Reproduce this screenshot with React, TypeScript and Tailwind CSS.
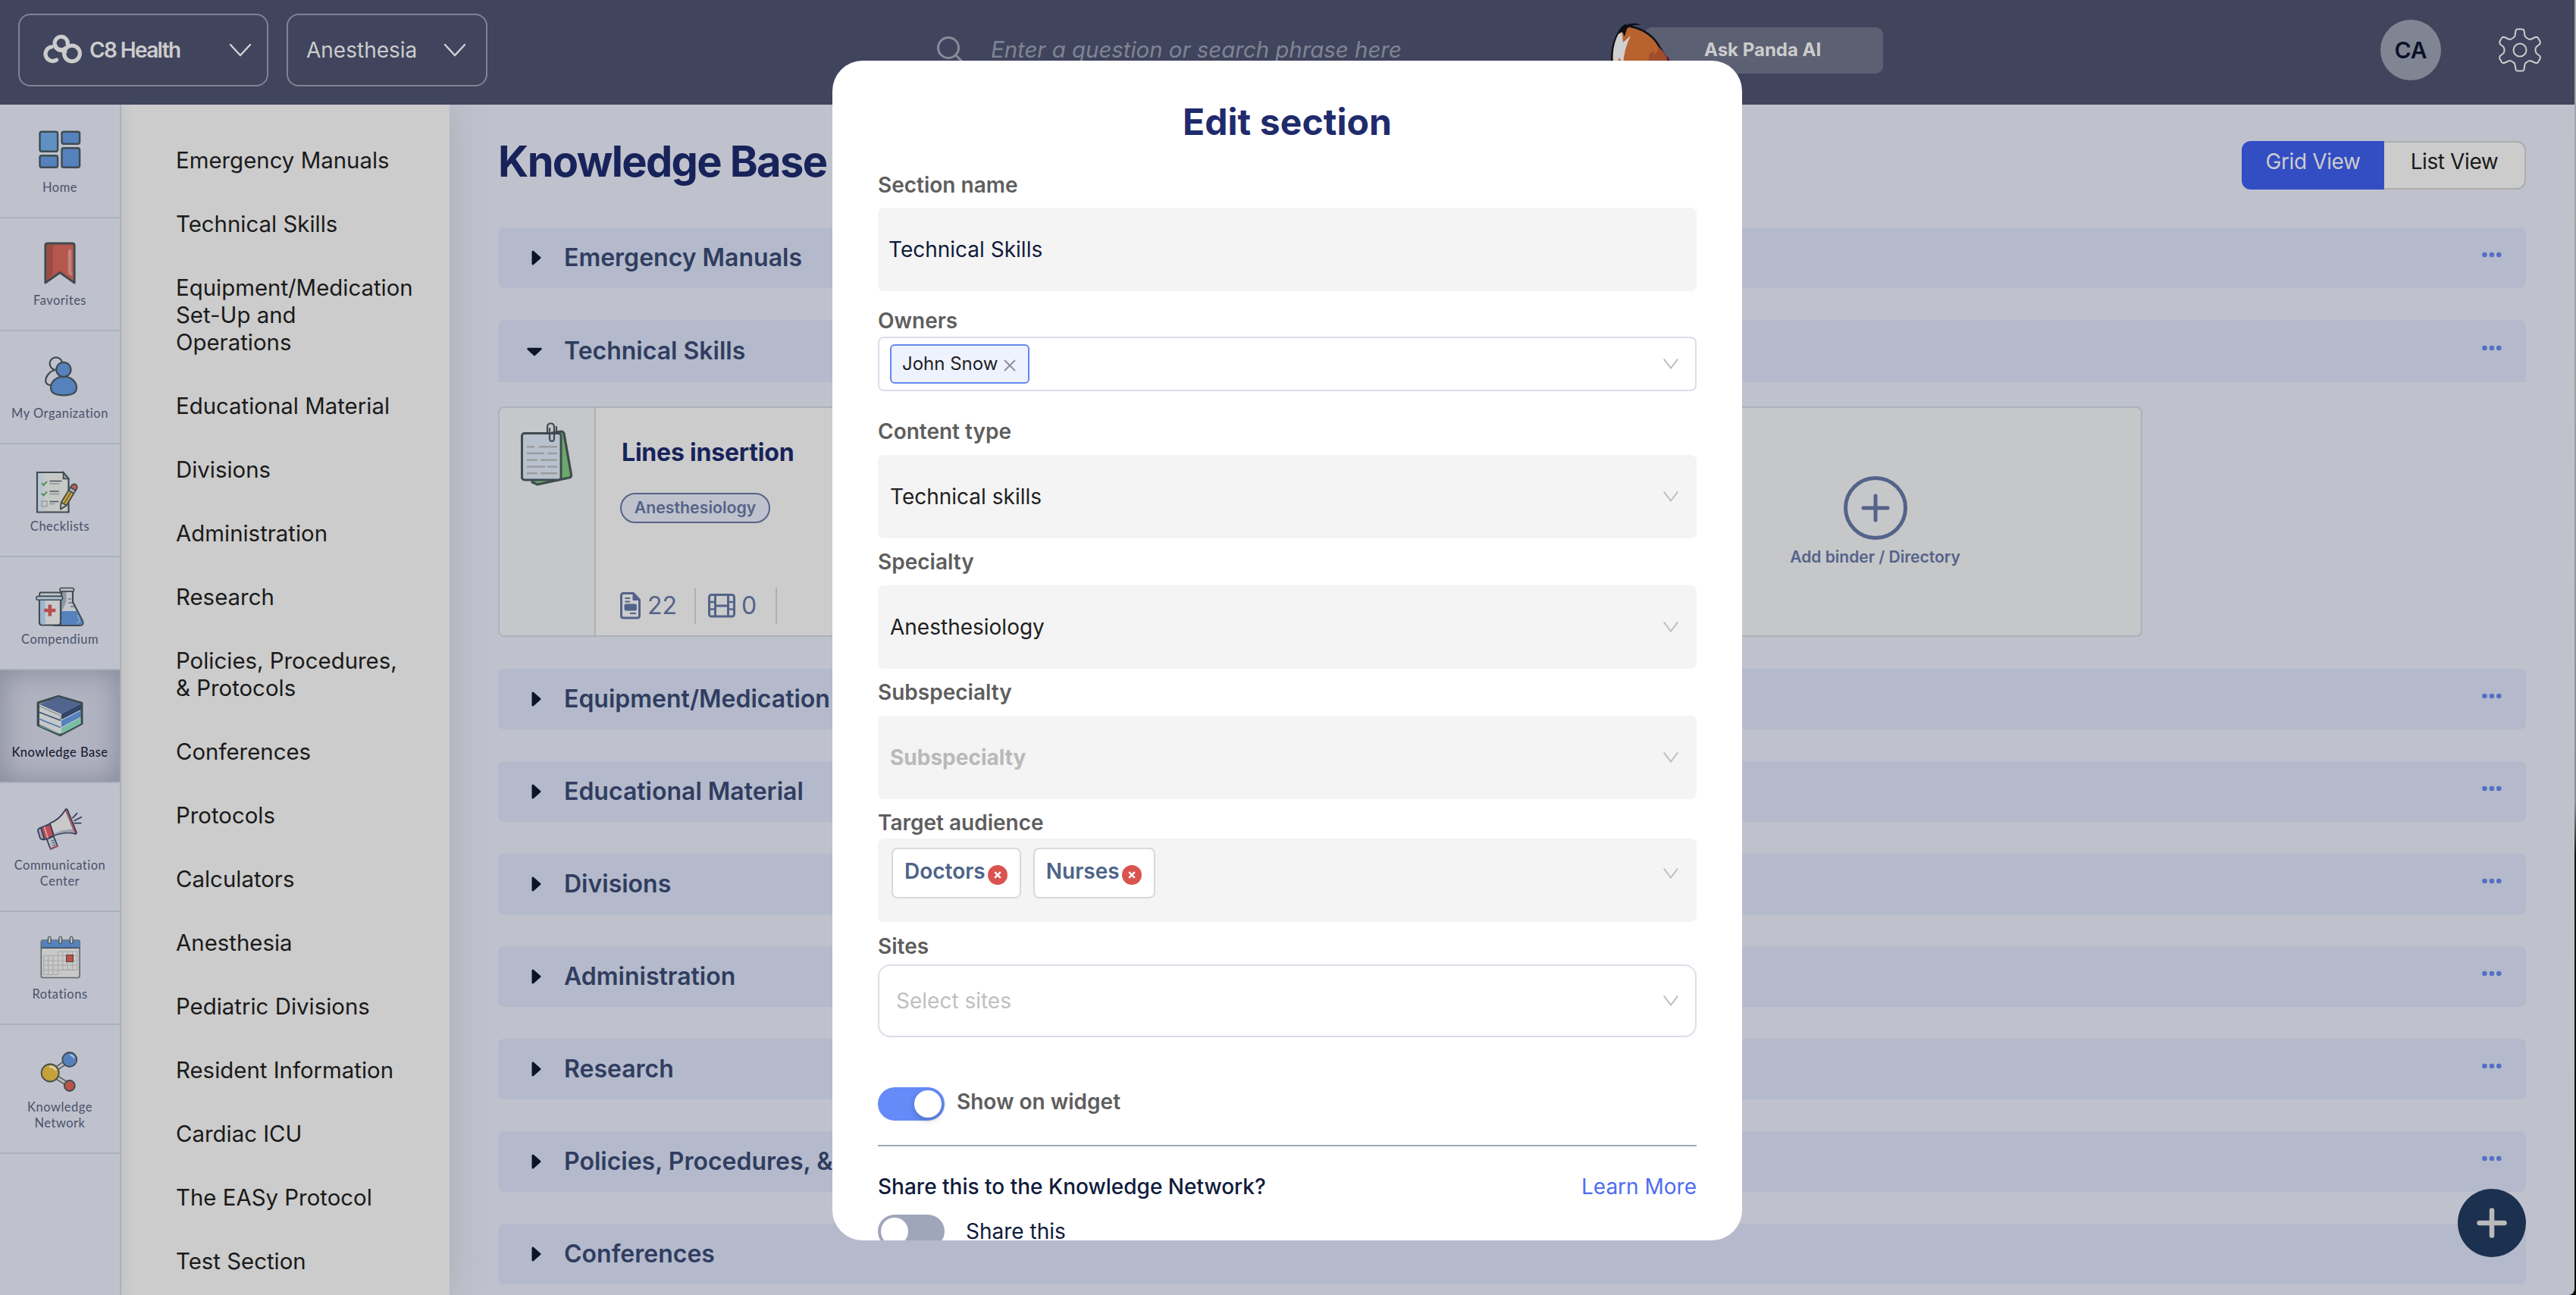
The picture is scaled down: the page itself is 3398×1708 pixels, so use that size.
import type { ReactNode } from 'react';
import { clsx } from 'clsx';

const OUTLINE = '#3f4b50';

const HomeIcon = () => (
    <g stroke={ OUTLINE } strokeWidth="2.4">
        <rect x="13.5" y="6.7" width="23.6" height="26" rx="2.5" fill="#6190c3"/>
        <rect x="42.5" y="6.7" width="23.6" height="16" rx="2.5" fill="#5581bd"/>
        <rect x="13.5" y="38.2" width="23.6" height="15.6" rx="2.5" fill="#5581bd"/>
        <rect x="42.5" y="28.3" width="23.6" height="25.5" rx="2.5" fill="#5581bd"/>
    </g>
);

const FavoritesIcon = () => (
    <g strokeLinejoin="round">
        <path d="M20.8 57V8q0-3 3-3h32.4q3 0 3 3v49L40 43.5Z" fill="#b5574d"/>
        <path d="M22 55V7h10l-1.5 5v34Z" fill="#9c4b43"/>
        <path d="M53 15v27q0 2 1.5 3" stroke="#c4837b" strokeWidth="4.5" strokeLinecap="round" fill="none"/>
        <path d="M20.8 57V8q0-3 3-3h32.4q3 0 3 3v49L40 43.5Z" fill="none" stroke={ OUTLINE } strokeWidth="2.8"/>
    </g>
);

const OrganizationIcon = () => (
    <g stroke={ OUTLINE } strokeWidth="2.2">
        <path d="M33 23.5c-7 1-12 9-11.8 14 .2 4 4 5.5 7.5 5.5" fill="none"/>
        <circle cx="34.9" cy="14.6" r="8.3" fill="none"/>
        <path d="M28 46.5c0-8 7-14.8 17-14.8s17 7 17 14.8c0 7-6 9.8-17 9.8s-17-2.8-17-9.8Z" fill="#5581bd"/>
        <circle cx="44.9" cy="22.5" r="9.6" fill="#5581bd"/>
    </g>
);

const ChecklistIcon = () => (
    <g>
        <path d="M10 9h34.5l7 8.5v44H10Z" fill="#c6c9c6" stroke={ OUTLINE } strokeWidth="2.2"/>
        <path d="M11.2 10.2h8v50h-8Z" fill="#b9c4cf"/>
        <path d="M44.5 9v8.5h7Z" fill="#8f989c" stroke={ OUTLINE } strokeWidth="1.6"/>
        <path d="m16 23 2.5 3 4.5-5M16 36.5l2.5 3 4.5-5" fill="none" stroke="#3f8a45" strokeWidth="1.8"/>
        <rect x="16" y="47" width="7" height="7" fill="none" stroke="#8a8f8a"/>
        <path d="M26.5 20.5h16M26.5 34h12M26.5 47.5h12" stroke="#4b5560" strokeWidth="1.3"/>
        <path d="M26.5 24h13M26.5 37.5h13M26.5 50.5h7" stroke="#8f979c" strokeWidth="1.3"/>
        <g transform="translate(41 57.5) rotate(31.5)">
            <path d="M0 0-4-8V-27h8v19Z" fill="#c9a135" stroke={ OUTLINE } strokeWidth="1.8" strokeLinejoin="round"/>
            <path d="M0-8v-19" stroke={ OUTLINE }/>
            <path d="M0 0-4-8h8Z" fill="#c9c9c4" stroke={ OUTLINE } strokeWidth="1.6" strokeLinejoin="round"/>
            <path d="M-4-31v-3a4 4 0 0 1 8 0v3Z" fill="#bd5b58" stroke={ OUTLINE } strokeWidth="1.8"/>
            <path d="M-4-31h8v4h-8Z" fill="#b5bdc6" stroke={ OUTLINE } strokeWidth="1.4"/>
        </g>
    </g>
);

const CompendiumIcon = () => (
    <g strokeLinejoin="round">
        <path d="M42.5 17v14L30 55q-3 7 4 7h32q6 0 4-6L57 31V17Z" fill="#c2c6ca" stroke={ OUTLINE } strokeWidth="2.2"/>
        <path d="M43.5 17h5v13l-8 18Z" fill="#8f97a5"/>
        <path d="M36 43h26.5l7 14q1.5 4-3.5 4H36Z" fill="#5581bd"/>
        <path d="M63 48l3 7q1 3-4 3.5" fill="none" stroke="#a9bfd9" strokeWidth="1"/>
        <path d="M51 27h4M51 32h6M54 37h5" stroke={ OUTLINE } strokeWidth="1.2"/>
        <rect x="40" y="12.5" width="18.5" height="4.6" rx="2" fill="#b9bfc4" stroke={ OUTLINE } strokeWidth="1.6"/>
        <path d="M13 28h28v30q0 3.5-3.5 3.5h-21Q13 61.5 13 58Z" fill="#c8cacb" stroke={ OUTLINE } strokeWidth="2.2"/>
        <path d="M14.2 29h6.5v31.5h-4q-2.5-.5-2.5-3Z" fill="#9cb5d1"/>
        <path d="M13 23.5v-2.5q0-2.5 2.5-2.5h24q2.5 0 2.5 2.5v2.5Z" fill="#c0c5ca" stroke={ OUTLINE } strokeWidth="1.8"/>
        <rect x="9" y="23.5" width="34.5" height="4.8" rx="1.5" fill="#aebccb" stroke={ OUTLINE } strokeWidth="1.6"/>
        <path d="M26.8 34.5v15M19.3 42h15" stroke="#b5504a" strokeWidth="4.6"/>
    </g>
);

const BooksIcon = () => (
    <g strokeLinejoin="round">
        <path d="M37.7 6.5 68.8 15.5V42.3L40.3 57.5 11.3 44.5V14.8Z" fill="#c6c9c8" stroke={ OUTLINE } strokeWidth="3.4"/>
        <path d="M37.7 7 67.7 16.3 42 29.7 13 17Z" fill="#52658e"/>
        <path d="M67.7 16.3V24L42 37V29.7Z" fill="#2f4468"/>
        <path d="M67.7 25.2V33.5L42 47V38.3Z" fill="#5581bd"/>
        <path d="M67.7 34.5V42.5L42 56V48.2Z" fill="#78bda4"/>
        <path d="M13 19.5 40 31.5q2 3 0 5.5" fill="none" stroke="#77797f" strokeWidth="1"/>
        <path d="M12 27 41 38.2" stroke="#3d516f" strokeWidth="1.6"/>
        <path d="M12 36 41 47.6" stroke="#4b76b3" strokeWidth="1.6"/>
        <path d="M13 45 40 56" stroke="#78bda4" strokeWidth="1.2"/>
    </g>
);

const MegaphoneIcon = () => (
    <g stroke="#33405c" strokeWidth="1.8" strokeLinejoin="round" strokeLinecap="round">
        <path d="m22.7 46 9-4 5.3 13-9.3 4Z" fill="#b8bcc4"/>
        <path d="m29 48 3-1M30 51l3-1M31 54l3-1" strokeWidth="1"/>
        <path d="m27.8 58 8.4-3.4" stroke="#c2565c"/>
        <path d="M26.5 25q13-5 21-18.3l13 31.8q-13-3-28.5 2.5Z" fill="#c9c9c9"/>
        <path d="M31 39q14-7 26-6l2 4.5q-13-2.5-27 3Z" fill="#9a9faa" stroke="none"/>
        <path d="m48.5 7 12.5 31" stroke="#c2565c" strokeWidth="2.6"/>
        <path d="M47.5 6.5q1.5-1 2.5.5l12 30q0 2-2 1.8" fill="none"/>
        <path d="m15 30.7 12-5 5 15.3-12.7 5.5Z" fill="#c04d57"/>
        <path d="m19.5 30 4.5 14" stroke="#d3a5a9"/>
        <path d="M15 30.7q-4 1-4 4l3 10q2 2 5.5 1.5Z" fill="#a3a8b5"/>
        <path d="m57 17.7 5.7-6M59.3 21.2l9-4.5M59.3 24.7h8.4"/>
    </g>
);

const CalendarIcon = () => (
    <g>
        <rect x="15.3" y="9" width="50.8" height="49.5" rx="2.5" fill="#c8c9c8" stroke="#5c686e" strokeWidth="1.6"/>
        <path d="M16 19v-7.5q0-2 2-2h45.4q2 0 2 2V19Z" fill="#5581bd"/>
        <path d="M15.5 19.3h50.5" stroke={ OUTLINE } strokeWidth="1.4"/>
        <path d="M37.5 24h25.3v24.5H37.5M18.5 29.5h44.3M18.5 36h44.3M18.5 42h44.3M18.5 48.3h44.3M18.5 29.5v25h19M24.8 29.5v25M31 29.5v25M37.5 24v30.5M43.8 24v24.5M50 24v24.5M56.5 24v24.5"
              fill="none" stroke="#a6a8aa" strokeWidth="1.1"/>
        <rect x="48.5" y="28.5" width="9" height="9" fill="#b8544a" stroke="#5b3a3a"/>
        <g fill="#c2c6ca" stroke={ OUTLINE } strokeWidth="1.2">
            <rect x="24.5" y="4.5" width="3.6" height="9" rx="1.5"/>
            <rect x="38.9" y="4.5" width="3.6" height="9" rx="1.5"/>
            <rect x="53.4" y="4.5" width="3.6" height="9" rx="1.5"/>
        </g>
    </g>
);

const NetworkIcon = () => (
    <g stroke={ OUTLINE }>
        <path d="m27 35 26-17.5M27 35l26 17" strokeWidth="6"/>
        <path d="m27 35 26-17.5M27 35l26 17" strokeWidth="3.5" stroke="#b5b9bc"/>
        <circle cx="27.2" cy="35" r="11.5" fill="#c6a13a" strokeWidth="1.8"/>
        <circle cx="52.8" cy="17.5" r="9.5" fill="#5581bd" strokeWidth="1.8"/>
        <circle cx="52.8" cy="52" r="7" fill="#b8544a" strokeWidth="1.8"/>
        <path d="M27 27q5 0 7.5 4" fill="none" stroke="#ddd3ae" strokeWidth="2.5" strokeLinecap="round"/>
        <path d="M54 11.5q3.5.5 4.5 3.5" fill="none" stroke="#a9c0dc" strokeWidth="2" strokeLinecap="round"/>
    </g>
);

interface RailItem {
    label: string;
    icon: ReactNode;
    height: string;
    active?: boolean;
}

const railItems: RailItem[] = [
    { label: 'Home', icon: <HomeIcon/>, height: 'h-[149px]' },
    { label: 'Favorites', icon: <FavoritesIcon/>, height: 'h-[149px]' },
    { label: 'My Organization', icon: <OrganizationIcon/>, height: 'h-[149px]' },
    { label: 'Checklists', icon: <ChecklistIcon/>, height: 'h-[149px]' },
    { label: 'Compendium', icon: <CompendiumIcon/>, height: 'h-[149px]' },
    { label: 'Knowledge Base', icon: <BooksIcon/>, height: 'h-[149px]', active: true },
    { label: 'Communication Center', icon: <MegaphoneIcon/>, height: 'h-[170px]' },
    { label: 'Rotations', icon: <CalendarIcon/>, height: 'h-[149px]' },
    { label: 'Knowledge Network', icon: <NetworkIcon/>, height: 'h-[170px]' },
];

const menuItems = [
    'Emergency Manuals',
    'Technical Skills',
    'Equipment/Medication Set-Up and Operations',
    'Educational Material',
    'Divisions',
    'Administration',
    'Research',
    'Policies, Procedures, & Protocols',
    'Conferences',
    'Protocols',
    'Calculators',
    'Anesthesia',
    'Pediatric Divisions',
    'Resident Information',
    'Cardiac ICU',
    'The EASy Protocol',
    'Test Section',
];

const sections = [
    'Emergency Manuals',
    'Technical Skills',
    'Equipment/Medication Set-Up and Operations',
    'Educational Material',
    'Divisions',
    'Administration',
    'Research',
    'Policies, Procedures, & Protocols',
    'Conferences',
];

const HeaderChevron = () => (
    <svg width="30" height="18" viewBox="0 0 30 18" fill="none" stroke="#d0d0d2" strokeWidth="2.5" strokeLinecap="round" strokeLinejoin="round">
        <path d="M2 2l13 14L28 2"/>
    </svg>
);

const SelectChevron = () => (
    <svg width="20" height="14" viewBox="0 0 20 14" fill="none" stroke="#bdbdbd" strokeWidth="2">
        <path d="M.8.5 10 12.5 19.2.5"/>
    </svg>
);

const Fox = () => (
    <svg className="absolute -left-[47px] -top-[9px]" width="96" height="62" viewBox="0 0 96 62">
        <path d="M5 62Q1 30 18 9q3-3 7-2Q52 12 64 30q14 22 22 40H5Z" fill="#b8622f" stroke="#0b0d14" strokeWidth="2.4"/>
        <path d="M54 44l6-4-1 6 6-6v-6l6 6q10 15 13 24H38l5-7 1 4 6-8 1 4Z" fill="#a04d2c"/>
        <path d="M76 62l1-16q5 8 8 16Z" fill="#5a1a2c"/>
        <path d="M7 62Q2 32 17 11l2 18 10-9q-9 18-10 39l-5-10-5 13Z" fill="#cfcfcf"/>
        <path d="M13 18Q17 6 24 4l-2 3Q32 1 43 6q-14-1-19 5l-3 10-3-6Z" fill="#0b0d14"/>
    </svg>
);

const Header = () => (
    <header className="h-[138px] shrink-0 bg-[#40445d] text-[#cccccc]">
        <div className="flex h-[132px] items-center pl-6">
            <button className="flex h-24 w-[330px] items-center rounded-2xl border-2 border-[#7f8494] pl-7 pr-5">
                <svg width="56" height="42" viewBox="0 0 56 42" fill="none" stroke="#cccccc" strokeWidth="5.2" strokeLinecap="round">
                    <path d="M20.500 34A9.400 9.400 0 1 1 14 16.800"/>
                    <circle cx="41" cy="25.500" r="10.400"/>
                    <path d="M32 18.800a8.600 8.600 0 1 1 3.200-5.500"/>
                    <path d="M18.500 14.500q1.500 6 8 7 4 .5 5.500 2"/>
                </svg>
                <span className="ml-2 whitespace-nowrap text-[28px] font-semibold tracking-[-1.63px]">C8 Health</span>
                <span className="ml-auto"><HeaderChevron/></span>
            </button>

            <button className="ml-6 flex h-24 w-[265px] items-center justify-between rounded-2xl border-2 border-[#7f8494] pl-6 pr-[26px]">
                <span className="text-[28px]">Anesthesia</span>
                <HeaderChevron/>
            </button>

            <svg className="ml-[592px]" width="38" height="38" viewBox="0 0 38 38" fill="none" stroke="#888b9a" strokeWidth="3" strokeLinecap="round">
                <circle cx="16" cy="16" r="13.5"/>
                <path d="M26 26l9.500 9.500"/>
            </svg>
            <span className="ml-[34px] w-[560px] whitespace-nowrap text-[29.4px] italic text-[#7f8494]">
                Enter a question or search phrase here
            </span>

            <div className="relative ml-[302px] flex h-[61px] w-[315px] items-center rounded-[10px] bg-[#5c6073] pl-[79px] text-2xl font-bold">
                <Fox/>
                Ask Panda AI
            </div>

            <div className="ml-[656px] flex size-20 items-center justify-center rounded-full bg-[#808594] text-3xl font-semibold text-[#0b1226]">
                CA
            </div>
            <svg className="ml-[76px]" width="56" height="58" viewBox="0 0 56 58" fill="none" stroke="#cccccc" strokeWidth="2" strokeLinejoin="round">
                <path d="M22.500 3.500Q23 1.500 25 1.500h6q2 0 2.500 2l1 6.500q.5 2 2.500 3l2.500 1.500q1.500 1 3.500 0l5.500-2.500q2.500-.5 3.500 1l2.500 4.500q1 2-.5 3.800L49.500 25q-1.200 1.500-1 4t1 4l4.500 3.700q1.500 1.800.5 3.800L52 45q-1 1.500-3.500 1L43 43.500q-2-1-3.500 0L37 45q-2 1-2.500 3l-1 6.500q-.5 2-2.500 2h-6q-2 0-2.500-2l-1-6.500q-.5-2-2.500-3l-2.500-1.500q-1.500-1-3.500 0L7.500 46Q5 46.500 4 45l-2.500-4.500q-1-2 .5-3.800L6.500 33q1-1.500 1-4t-1-4L2 21.300Q.5 19.500 1.500 17.500L4 13q1-1.500 3.500-1L13 14.500q2 1 3.500 0L19 13q2-1 2.500-3Z"/>
                <circle cx="28" cy="29" r="8.5"/>
            </svg>
        </div>
    </header>
);

const Rail = () => (
    <nav className="z-10 flex w-40 shrink-0 flex-col border-r-2 border-[#aab0bb] bg-[#bfc2cc] pt-px shadow-[0_0_20px_rgba(0,0,0,0.08)]">
        { railItems.map( item => (
            <div
                key={ item.label }
                className={
                    clsx(
                        'flex shrink-0 flex-col items-center border-b-2 border-[#abb1bb] px-3 pt-7 text-center font-[Lato] text-[16.5px] leading-[21px] tracking-[0.5px]',
                        item.height,
                        item.active
                            ? 'bg-[#b2b4c2] text-[#0f1229] shadow-[inset_0_0_40px_rgba(60,66,84,0.4)]'
                            : 'text-[#4b516b]',
                    )
                }>
                <svg className="mb-1.5 shrink-0" width="80" height="64" viewBox="0 0 80 64">{ item.icon }</svg>
                <span className="-mx-3">
                    { item.label === 'Communication Center' || item.label === 'Knowledge Network'
                        ? item.label.split( ' ' ).map( word => <span key={ word } className="block">{ word }</span> )
                        : <span className="whitespace-nowrap">{ item.label }</span> }
                </span>
            </div>
        ) ) }
    </nav>
);

const Menu = () => (
    <aside className="flex w-[433px] shrink-0 flex-col gap-12 bg-[#cccccc] pl-18 pr-11 pt-14 text-[29.4px] leading-9 text-[#1a1a1a] shadow-[0_0_48px_rgba(90,96,120,0.22)]">
        { menuItems.map( item => <span key={ item } className="shrink-0">{ item }</span> ) }
    </aside>
);

const SectionBar = ( { title, open }: { title: string; open?: boolean } ) => (
    <div
        className={
            clsx(
                'flex shrink-0 items-center bg-[#b4bacb] pl-9 pr-8',
                open ? 'h-[82px] rounded-t-lg' : 'h-20 rounded-lg',
            )
        }>
        <svg width="24" height="24" viewBox="0 0 24 24" fill="#0b1429" stroke="#0b1429" strokeWidth="3" strokeLinejoin="round">
            { open ? <path d="M3.500 9h17L12 17Z" strokeWidth="2.5"/> : <path d="M10 4v16L19 12Z"/> }
        </svg>
        <span className="ml-[27px] whitespace-nowrap text-[32px] font-semibold text-[#303d60]">{ title }</span>
        <svg className="mb-2 ml-auto" width="26" height="8" viewBox="0 0 26 8" fill="#5470c4">
            <circle cx="3.5" cy="4" r="3.3"/>
            <circle cx="12.9" cy="4" r="3.3"/>
            <circle cx="22.3" cy="4" r="3.3"/>
        </svg>
    </div>
);

const BinderCard = () => (
    <div className="flex h-[304px] overflow-hidden rounded-lg border-2 border-[#aab2b9] bg-[#cccccc]">
        <div className="w-[127px] shrink-0 border-r-2 border-[#aab2b9] bg-[#c5c7ca] pl-[21px] pt-3">
            <svg width="84" height="96" viewBox="0 0 84 96" strokeLinejoin="round">
                <path d="M22 86l7 3 42-9q3-1 2.500-4L64 22q-1-3-4-3l-12 2Z" fill="#6aa968" stroke={ OUTLINE } strokeWidth="3.2"/>
                <rect x="8.5" y="21.5" width="51.5" height="61.5" rx="3.5" fill="#b9c1cd" stroke={ OUTLINE } strokeWidth="3"/>
                <path d="M16 39.300h8M32 39.300h22M16 48h21M43 48h11M16 56.700h12M34 56.700h20M16 65.500h22M43 65.500h11M16 74.200h12M34 74.200h20"
                      stroke="#9b9c9e" strokeWidth="2.4" strokeLinecap="round"/>
                <path d="M42 20v-7q0-4.500 4.500-4.500t4.500 4.500v15q0 4-3 4t-3-4V15M54 13v8" fill="none" stroke={ OUTLINE } strokeWidth="2.2" strokeLinecap="round"/>
            </svg>
        </div>
        <div className="pl-8 pt-[39px] text-[#54638a]">
            <h3 className="ml-0.5 h-10 text-[32px] font-bold leading-10 tracking-[-0.2px] text-[#17235a]">Lines insertion</h3>
            <span className="mt-[33px] flex h-10 w-[198px] items-center justify-center rounded-full border-2 border-[#54638a] bg-[#bfc2cc] text-[21.3px] font-semibold">
                Anesthesiology
            </span>
            <div className="mt-[85px] flex h-12 items-center text-[32px]">
                <svg width="27" height="36" viewBox="0 0 27 36" fill="none" stroke="#54638a" strokeWidth="3">
                    <path d="M4.500 1.500h13l8 8.500v21q0 3-3 3h-18q-3 0-3-3v-26.500q0-3 3-3Z" strokeLinejoin="round"/>
                    <path d="M17 1.500l8.500 9H17Z" fill="#54638a" strokeWidth="1"/>
                    <path d="M6.500 8h6.500M6.500 12.500h6.500M13 28h8" strokeWidth="2"/>
                    <rect x="7" y="17" width="13.5" height="6" rx="1" fill="#54638a"/>
                </svg>
                <span className="ml-[9px] w-[62px]">22</span>
                <span className="h-12 w-0.5 bg-[#a9b1bc]"/>
                <svg className="ml-4" width="36" height="32" viewBox="0 0 36 32" fill="none" stroke="#54638a" strokeWidth="3">
                    <rect x="1.5" y="1.5" width="33" height="28.5" rx="3"/>
                    <path d="M9.500 2v28M26.500 2v28M9.500 16h17"/>
                    <path d="M2 11h7M2 20.500h7M27 11h7M27 20.500h7" strokeWidth="2.5"/>
                </svg>
                <span className="ml-2 w-[45px]">0</span>
                <span className="h-12 w-0.5 bg-[#a9b1bc]"/>
            </div>
        </div>
    </div>
);

const AddCard = () => (
    <div className="col-start-3 flex h-[304px] flex-col items-center rounded-lg border-2 border-[#aab2b9] bg-[#c6c7c9] pt-[90px] text-[#54638a]">
        <svg width="84" height="84" viewBox="0 0 84 84" fill="none" stroke="#54638a" strokeLinecap="round">
            <circle cx="42" cy="42" r="39.5" strokeWidth="5"/>
            <path d="M42 26v32M26 42h32" strokeWidth="5"/>
        </svg>
        <span className="mt-2 text-[21px] font-semibold leading-[30px]">Add binder / Directory</span>
    </div>
);

const Content = () => (
    <main className="flex flex-1 flex-col px-16 pt-12">
        <div className="flex h-16 shrink-0 items-start justify-between">
            <h1 className="text-[56px] font-bold leading-[54px] tracking-[-1.65px] text-[#17235a]">Knowledge Base</h1>
            <div className="flex h-16 text-center text-[28px] leading-[54px] tracking-[-0.4px]">
                <button className="flex w-[188px] justify-center rounded-l-xl bg-[#334dc3] text-[#cccccc]">Grid View</button>
                <button className="flex w-[187px] justify-center rounded-r-xl border-2 border-l-0 border-[#adadad] bg-[#cccccc] leading-[50px] text-[#1a1a1a]">List View</button>
            </div>
        </div>

        <div className="mt-[50px] flex flex-col gap-[42px]">
            { sections.map( title => title === 'Technical Skills'
                ? (
                    <div key={ title }>
                        <SectionBar title={ title } open/>
                        <div className="mt-8 grid w-[2169px] grid-cols-3 gap-[27px]">
                            <BinderCard/>
                            <AddCard/>
                        </div>
                    </div>
                )
                : <SectionBar key={ title } title={ title }/> ) }
        </div>
    </main>
);

const FieldLabel = ( { children }: { children: ReactNode } ) => (
    <label className="block h-[34px] text-[28px] font-semibold leading-[34px] text-[#5e5e5e]">{ children }</label>
);

const AudienceTag = ( { name }: { name: string } ) => (
    <span className="flex h-[67px] items-center rounded-lg border-2 border-[#d9d9d9] bg-white pl-[15px] pr-4 text-[28px] font-semibold text-[#4d6488]">
        <span className="mb-[5px]">{ name }</span>
        <svg className="ml-[3px] mt-1" width="26" height="26" viewBox="0 0 26 26">
            <circle cx="13" cy="13" r="13" fill="#d9544f"/>
            <path d="M9.200 9.200l7.600 7.600M16.800 9.200l-7.600 7.600" stroke="#fff" strokeWidth="2.4"/>
        </svg>
    </span>
);

const EditSectionModal = () => (
    <div className="absolute inset-0 flex items-start justify-center pr-0.5 pt-20">
        <div className="h-[1556px] w-[1200px] overflow-hidden rounded-[40px] bg-white px-15 pt-[52px] text-[28px] text-[#212121]">
            <h2 className="mb-[37px] text-center text-5xl font-bold leading-[58px] tracking-[0.1px] text-[#1f2b6c]">Edit section</h2>

            <FieldLabel>Section name</FieldLabel>
            <div className="mb-[22px] mt-[13px] flex h-[110px] items-center rounded-lg bg-[#f4f4f4] px-3.5 text-[#101b3b]">
                Technical Skills
            </div>

            <FieldLabel>Owners</FieldLabel>
            <div className="mb-9 mt-1 flex h-[72px] items-center justify-between rounded-lg border-2 border-[#dadeea] pl-3.5 pr-[22px]">
                <span className="flex h-[52px] w-[184px] items-center rounded-md border-2 border-[#6488f0] bg-[#eef2fe] pl-3.5 text-2xl">
                    John Snow
                    <svg className="ml-2 mt-1" width="16" height="16" viewBox="0 0 16 16" stroke="#8a8d99" strokeWidth="1.8">
                        <path d="M1 1l14 14M15 1 1 15"/>
                    </svg>
                </span>
                <SelectChevron/>
            </div>

            <FieldLabel>Content type</FieldLabel>
            <div className="my-3.5 flex h-[110px] items-center justify-between rounded-lg bg-[#f4f4f4] pl-4 pr-6">
                Technical skills
                <SelectChevron/>
            </div>

            <FieldLabel>Specialty</FieldLabel>
            <div className="my-3.5 flex h-[110px] items-center justify-between rounded-lg bg-[#f4f4f4] pl-4 pr-6">
                Anesthesiology
                <SelectChevron/>
            </div>

            <FieldLabel>Subspecialty</FieldLabel>
            <div className="my-3.5 flex h-[110px] items-center justify-between rounded-lg bg-[#f4f4f4] pl-4 pr-6 font-bold text-[#b9b9b9]">
                Subspecialty
                <SelectChevron/>
            </div>

            <FieldLabel>Target audience</FieldLabel>
            <div className="mb-[15px] mt-1 flex h-[110px] items-start rounded-lg bg-[#f4f4f4] pl-[18px] pr-6 pt-3">
                <div className="flex h-[67px] flex-1 items-center gap-4">
                    <AudienceTag name="Doctors"/>
                    <AudienceTag name="Nurses"/>
                    <span className="ml-auto"><SelectChevron/></span>
                </div>
            </div>

            <FieldLabel>Sites</FieldLabel>
            <div className="mt-[7px] flex h-24 items-center justify-between rounded-2xl border-2 border-[#dadfe9] pl-[22px] pr-[22px] text-[#bfbfbf]">
                Select sites
                <SelectChevron/>
            </div>

            <div className="mt-[66px] flex h-11 items-center">
                <span className="flex h-11 w-22 items-center justify-end rounded-full bg-[#668af7] pr-1">
                    <span className="size-9 rounded-full bg-white shadow-[0_4px_8px_rgba(0,35,11,0.2)]"/>
                </span>
                <span className="mb-1.5 ml-4 font-semibold text-[#5e5e5e]">Show on widget</span>
            </div>

            <div className="mt-8 h-0.5 bg-[#a0a7bd]"/>

            <div className="mt-9 flex h-[34px] items-center justify-between">
                <span className="font-medium text-[#101b3b]">Share this to the Knowledge Network?</span>
                <a className="text-[#4f6df0]">Learn More</a>
            </div>
            <div className="mt-5 flex h-11 items-center">
                <span className="flex h-11 w-22 items-center rounded-full bg-[#a0a6ba] pl-1">
                    <span className="size-9 rounded-full bg-white"/>
                </span>
                <span className="ml-7 text-[#101b3b]">Share this</span>
            </div>
        </div>
    </div>
);

export default function App() {
    return (
        <div className="relative flex h-[1708px] w-[3398px] overflow-hidden bg-[linear-gradient(to_bottom,#a8a8a8_0%,#a0a0a0_30%,#8a8d90_62%,#15160f_66%,#0c0c08_100%)] font-[Inter,sans-serif]">
            <div className="flex h-full w-[3396px] flex-col overflow-hidden rounded-br-lg bg-[#bfc2cc]">
                <Header/>
                <div className="flex flex-1 overflow-hidden">
                    <Rail/>
                    <Menu/>
                    <Content/>
                </div>
            </div>

            <button className="absolute bottom-[50px] right-[66px] flex size-[90px] items-center justify-center rounded-full bg-[#1c3050]">
                <svg width="40" height="40" viewBox="0 0 40 40" stroke="#bababa" strokeWidth="6.5" strokeLinecap="round">
                    <path d="M20 3.500v33M3.500 20h33"/>
                </svg>
            </button>

            <EditSectionModal/>
        </div>
    );
}
